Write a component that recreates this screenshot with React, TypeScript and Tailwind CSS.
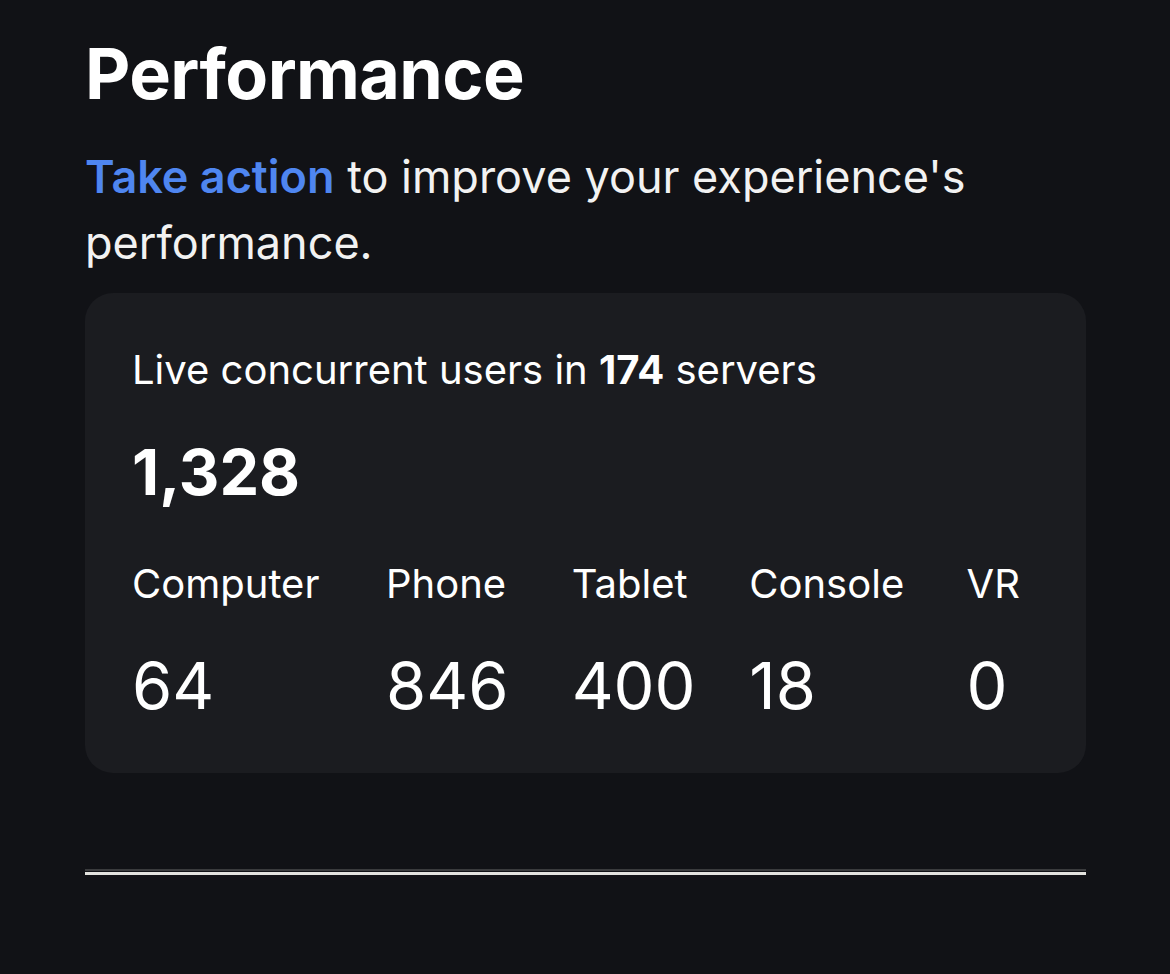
export default function App() {
  const stats = [
    { label: "Computer", value: "64", w: "w-[256px]" },
    { label: "Phone", value: "846", w: "w-[187px]" },
    { label: "Tablet", value: "400", w: "w-[179px]" },
    { label: "Console", value: "18", w: "w-[219px]" },
    { label: "VR", value: "0", w: "w-[80px]" },
  ]

  return (
    <div className="min-h-[974px] w-full bg-[#111216] text-white" style={{ fontFamily: "Inter, 'Noto Sans', sans-serif" }}>
      <div className="ml-[85px] w-[1001px] pt-[30px]">
        <h1 className="text-[70px] font-bold leading-[88px] tracking-[-0.6px]">Performance</h1>
        <p className="mt-[26px] text-[45px] leading-[66px] text-[#f2f2f2]">
          <span className="font-semibold text-[#4f86f0]">Take action</span> to improve your experience's performance.
        </p>

        <div className="mt-[17px] rounded-[28px] bg-[#1b1c20] pl-[47px] pr-[40px] pt-[52px] pb-[49px]">
          <p className="text-[40px] leading-[50px]">
            Live concurrent users in <span className="font-bold">174</span> servers
          </p>
          <p className="mt-[39px] text-[63px] font-bold leading-[76px]">1,328</p>
          <div className="mt-[49px] flex">
            {stats.map((s) => (
              <div key={s.label} className={`flex flex-col ${s.w}`}>
                <span className="text-[40px] leading-[50px]">{s.label}</span>
                <span className="mt-[39px] text-[65px] leading-[76px]">{s.value}</span>
              </div>
            ))}
          </div>
        </div>

        <div className="mt-[96px] h-[6px] border-t-2 border-[#3a3b3d] bg-[#111216]">
          <div className="mt-[1px] h-[3px] bg-[#e2e2de]" />
        </div>
      </div>
    </div>
  )
}
